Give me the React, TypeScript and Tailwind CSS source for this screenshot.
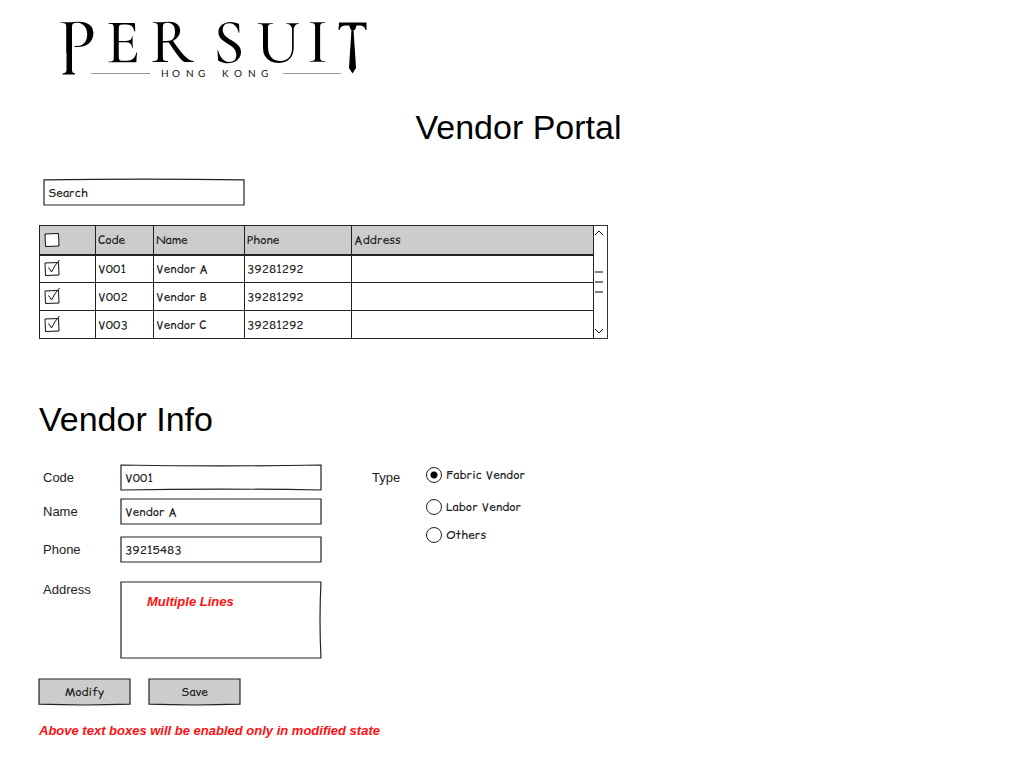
import type { ReactNode } from "react";

const hand = "font-[Comic_Relief,Comic_Sans_MS,Comic_Neue,Lato,sans-serif]";

const outlines = {
  raised: "M0 3 Q50 -2 100 3 L100 100 L0 100 Z",
  pinched: "M0 0 Q50 7 100 0 L100 100 Q50 93 0 100 Z",
  sagging: "M0 0 L100 0 L100 97 Q50 103 0 97 Z",
  plain: "M0 0 L100 0 L100 100 L0 100 Z",
  bentRight: "M0 0 L100 0 Q99 50 100 100 L0 100 Z",
};

function Sketch({
  shape = "plain",
  fill = "#fff",
  className,
  children,
}: {
  shape?: keyof typeof outlines;
  fill?: string;
  className: string;
  children: ReactNode;
}) {
  return (
    <div className={`relative isolate ${className}`}>
      <svg
        className="absolute inset-0 -z-10 h-full w-full overflow-visible"
        viewBox="0 0 100 100"
        preserveAspectRatio="none"
        aria-hidden="true"
      >
        <path d={outlines[shape]} fill={fill} stroke="#222" strokeWidth="1.2" vectorEffect="non-scaling-stroke" />
      </svg>
      {children}
    </div>
  );
}

function Logo() {
  return (
    <svg className="ml-[11px] block overflow-visible" width="320" height="84" viewBox="50 0 320 84" role="img" aria-label="Per Suit Hong Kong">
      <defs>
        <clipPath id="bowl">
          <rect x="58" y="0" width="44" height="53" />
        </clipPath>
      </defs>
      <g fontFamily="Cormorant Garamond, Liberation Serif, serif" fontWeight="500" fontSize="63" fill="#000">
        <text x="58" y="66" fontSize="70" fontWeight="500" clipPath="url(#bowl)">P</text>
        <text x="106" y="62">E</text>
        <text x="150" y="62">R</text>
        <text x="213" y="62">S</text>
        <text x="256" y="62">U</text>
        <text x="307" y="62">I</text>
      </g>
      <path d="M66.500 24h5.500v46q0 3 3 3.500v1H62.500v-1q4-.5 4-3.500z" />
      <path d="M339 22.500h27.500v7.500h-1q-1-4.500-5.500-4.500h-3.500l-1.500 4.500h-4l-2-4.500h-3.500q-5 0-6 4.500h-1z" />
      <path d="M351.500 29h2l2.500 39-3.500 5.500-3.500-5.500z" />
      <path d="M91 73.500h59M283 73.500h58" stroke="#999" strokeWidth="1" />
      <g fontFamily="Lato, sans-serif" fontSize="10" fill="#111">
        <text x="161" y="77">H</text>
        <text x="172" y="77">O</text>
        <text x="186" y="77">N</text>
        <text x="198" y="77">G</text>
        <text x="222" y="77">K</text>
        <text x="234" y="77">O</text>
        <text x="248" y="77">N</text>
        <text x="261" y="77">G</text>
      </g>
    </svg>
  );
}

function Check({ label, checked = false }: { label: string; checked?: boolean }) {
  return (
    <span className="relative block h-4 w-4">
      <input
        type="checkbox"
        aria-label={label}
        defaultChecked={checked}
        className="peer block h-4 w-4 appearance-none"
      />
      <svg className="pointer-events-none absolute inset-0 overflow-visible peer-checked:hidden" width="16" height="16" fill="#fff" stroke="#111">
        <path d="M1 2l13.500-.5.500 12.500-13.500.5z" />
      </svg>
      <svg className="pointer-events-none absolute inset-0 hidden overflow-visible peer-checked:block" width="16" height="16" fill="none" stroke="#111">
        <path d="M1 2l13.500-.5.500 12.500-13.500.5z" fill="#fff" />
        <path d="M4.500 6.500q2 2.500 3 4.500Q10 5 15.500-1" />
      </svg>
    </span>
  );
}

const vendors = [
  { code: "V001", name: "Vendor A", phone: "39281292" },
  { code: "V002", name: "Vendor B", phone: "39281292" },
  { code: "V003", name: "Vendor C", phone: "39281292" },
];

function VendorTable() {
  const cell = "border border-[#222] px-[2px] py-0 text-left font-normal";
  const checkCell = "border border-[#222] py-0 pr-[2px] pl-1 text-left font-normal";
  return (
    <div className={`mt-5 flex w-full max-w-[569px] text-[12px] text-[#222] ${hand}`}>
      <table className="min-w-0 flex-1 table-fixed border-collapse">
        <colgroup>
          <col className="w-[56px]" />
          <col className="w-[58px]" />
          <col className="w-[91px]" />
          <col className="w-[107px]" />
          <col />
        </colgroup>
        <thead>
          <tr className="h-[29px] border-b-2 border-[#222] bg-[#ccc]">
            <th className={checkCell}><Check label="Select all vendors" /></th>
            <th className={cell}>Code</th>
            <th className={cell}>Name</th>
            <th className={cell}>Phone</th>
            <th className={cell}>Address</th>
          </tr>
        </thead>
        <tbody>
          {vendors.map((v) => (
            <tr key={v.code} className="h-7">
              <td className={checkCell}><Check label={`Select ${v.name}`} checked /></td>
              <td className={cell}>{v.code}</td>
              <td className={cell}>{v.name}</td>
              <td className={cell}>{v.phone}</td>
              <td className={cell}></td>
            </tr>
          ))}
        </tbody>
      </table>
      <div className="flex w-[14px] flex-col items-start justify-between border border-l-0 border-[#333] py-1">
        <svg width="10" height="6" fill="none" stroke="#111"><path d="M1 5l4-4 4 4" /></svg>
        <svg width="10" height="22" stroke="#555"><path d="M1 1h8M1 11h8M1 21h8" strokeWidth="1.500" /></svg>
        <svg width="10" height="6" fill="none" stroke="#111"><path d="M1 1l4 4 4-4" /></svg>
      </div>
    </div>
  );
}

function Field({
  id,
  label,
  value,
  shape,
  className,
}: {
  id: string;
  label: string;
  value: string;
  shape?: keyof typeof outlines;
  className?: string;
}) {
  return (
    <div className={`flex items-center ${className ?? ""}`}>
      <label htmlFor={id} className="w-[78px] shrink-0 text-[13px] text-[#222]">{label}</label>
      <Sketch shape={shape} className="h-[25px] w-[200px]">
        <input
          id={id}
          defaultValue={value}
          className={`block h-full w-full bg-transparent px-1 text-[12px] text-[#222] outline-none ${hand}`}
        />
      </Sketch>
    </div>
  );
}

function Radio({ label, checked, className }: { label: string; checked?: boolean; className?: string }) {
  return (
    <label className={`flex items-center gap-1 text-[12px] leading-5 text-[#222] ${hand} ${className ?? ""}`}>
      <input
        type="radio"
        name="vendor-type"
        defaultChecked={checked}
        className="h-4 w-4 appearance-none rounded-full border border-[#222] checked:bg-[radial-gradient(circle,#000_3px,transparent_4px)]"
      />
      {label}
    </label>
  );
}

function ActionButton({ children }: { children: string }) {
  return (
    <Sketch shape="sagging" fill="#ccc" className="h-[26px] w-[91px]">
      <button type="button" className={`h-full w-full text-[12px] text-[#222] ${hand}`}>{children}</button>
    </Sketch>
  );
}

export default function App() {
  return (
    <main className="min-h-screen bg-white pr-6 pb-6 pl-[39px] font-[Liberation_Sans,Arial,sans-serif] text-black">
      <Logo />
      <h1 className="mt-[23px] text-center text-[34px] leading-10">Vendor Portal</h1>

      <Sketch shape="raised" className="mt-8 ml-[5px] h-[26px] w-[200px]">
        <input
          type="text"
          aria-label="Search"
          defaultValue="Search"
          className={`block h-full w-full bg-transparent px-1 text-[12px] text-[#222] outline-none ${hand}`}
        />
      </Sketch>

      <VendorTable />

      <h2 className="mt-[60px] text-[34px] leading-10">Vendor Info</h2>

      <form className="mt-[26px]" onSubmit={(e) => e.preventDefault()}>
        <div className="flex flex-wrap gap-[51px]">
          <div className="pl-1">
            <Field id="code" label="Code" value="V001" shape="pinched" />
            <Field id="name" label="Name" value="Vendor A" className="mt-[9px]" />
            <Field id="phone" label="Phone" value="39215483" className="mt-[13px]" />
            <div className="mt-5 flex items-start">
              <label htmlFor="address" className="w-[78px] shrink-0 text-[13px] leading-4 text-[#222]">Address</label>
              <Sketch shape="bentRight" className="h-[76px] w-[200px]">
                <textarea
                  id="address"
                  defaultValue="Multiple Lines"
                  className="block h-full w-full resize-none bg-transparent px-[26px] py-3 text-[13px] leading-4 font-bold text-[#f11] italic outline-none"
                />
              </Sketch>
            </div>
          </div>
          <div role="radiogroup" aria-labelledby="type-label" className="flex items-start">
            <span id="type-label" className="w-[54px] pt-[5px] text-[13px] leading-4 text-[#222]">Type</span>
            <div>
              <Radio label="Fabric Vendor" checked />
              <Radio label="Labor Vendor" className="mt-3" />
              <Radio label="Others" className="mt-2" />
            </div>
          </div>
        </div>
        <div className="mt-[21px] flex gap-[19px]">
          <ActionButton>Modify</ActionButton>
          <ActionButton>Save</ActionButton>
        </div>
        <p className="mt-[18px] text-[13px] leading-4 font-bold text-[#f11] italic">
          Above text boxes will be enabled only in modified state
        </p>
      </form>
    </main>
  );
}
